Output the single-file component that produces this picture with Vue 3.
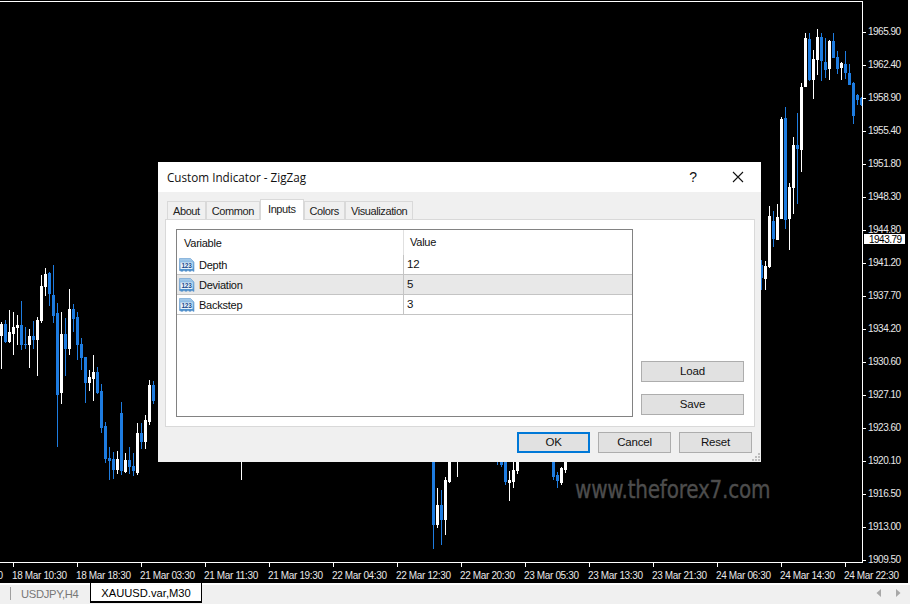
<script setup>
const priceLabels = ['1965.90','1962.40','1958.90','1955.40','1951.80','1948.30','1944.80','1941.20','1937.70','1934.20','1930.60','1927.10','1923.60','1920.10','1916.50','1913.00','1909.50']
const timeLabels = ['18 Mar 02:30','18 Mar 10:30','18 Mar 18:30','21 Mar 03:30','21 Mar 11:30','21 Mar 19:30','22 Mar 04:30','22 Mar 12:30','22 Mar 20:30','23 Mar 05:30','23 Mar 13:30','23 Mar 21:30','24 Mar 06:30','24 Mar 14:30','24 Mar 22:30']
const tabs = ['About','Common','Inputs','Colors','Visualization']
const rows = [
  { name: 'Depth', value: '12' },
  { name: 'Deviation', value: '5' },
  { name: 'Backstep', value: '3' }
]
// left cluster coordinates: x, colour, wick top, body top, body bottom, wick bottom (in 3x crop units)
const left = [
[4,'w',185,192,228,325],[16,'b',180,192,245,250],[28,'w',150,215,245,250],[40,'w',155,200,220,285],[52,'w',165,195,205,255],[64,'b',122,195,255,270],[76,'b',200,252,255,265],[88,'w',208,228,255,325],[100,'b',182,228,240,265],[112,'w',172,180,240,350],[124,'w',45,78,182,190],[136,'w',25,42,80,108],[148,'b',35,38,102,138],[160,'b',15,105,168,190],[172,'b',128,160,405,560],[184,'w',155,222,400,430],[196,'b',175,222,268,348],[208,'w',88,148,268,285],[220,'b',132,148,178,215],[232,'b',155,170,255,300],[244,'b',235,252,295,330],[256,'b',290,292,370,428],[268,'w',330,350,368,392],[280,'w',285,335,355,422],[292,'b',320,335,398,402],[304,'b',372,392,502,518],[316,'b',485,498,598,608],[328,'b',560,595,603,660],[340,'b',575,598,630,655],[352,'w',572,598,630,640],[364,'b',425,460,635,645],[376,'w',580,600,635,640],[388,'b',560,600,622,640],[400,'b',580,618,632,650],[412,'w',490,518,638,645],[424,'b',490,518,545,568],[436,'w',465,480,545,568],[448,'w',360,375,485,495],[460,'b',362,375,422,430]
].map(c => [c[0] / 3, c[1], ...c.slice(2).map(v => 260 + v / 3)])
const right = [
[34,'b',780,795,835,870],[46,'w',782,797,835,870],[58,'w',618,648,802,805],[70,'b',633,663,718,740],[82,'w',612,650,718,720],[94,'w',352,356,655,655],[106,'b',320,354,660,685],[118,'w',550,560,657,752],[130,'w',410,435,565,642],[142,'b',338,435,448,610],[154,'w',250,262,450,518],[166,'w',100,115,263,263],[178,'b',100,118,240,245],[190,'w',150,178,240,298],[202,'w',88,112,180,225],[214,'b',100,110,182,243],[226,'b',115,185,208,235],[238,'w',120,122,205,240],[250,'b',100,122,172,175],[262,'b',152,170,205,222],[274,'w',185,190,205,240],[286,'b',152,192,218,235],[298,'b',192,218,255,255],[310,'b',245,250,348,372],[322,'b',282,285,300,315],[334,'b',292,295,315,318]
].map(c => [750 + c[0] / 3, c[1], ...c.slice(2).map(v => v / 3)])
const below = [
[433,'b',455,455,525,549],[437,'w',488,505,525,528],[441,'b',490,505,520,545],[445,'w',477,480,520,535],[449,'w',455,455,482,483],[457,'w',455,455,455,477],[241,'w',455,455,455,480],[497,'b',455,455,460,465],[501,'b',455,455,465,467],[505,'b',455,455,482,485],[509,'w',471,480,483,501],[513,'w',455,470,482,488],[517,'w',455,455,471,474],[553,'b',455,455,477,480],[557,'b',472,475,481,488],[561,'w',467,468,483,485],[565,'w',455,455,470,473]
]
const candles = [...left, ...below, ...right].map(([x, c, wt, bt, bb, wb]) => ({
  x: Math.round(x), color: c === 'b' ? '#1e7ce0' : '#ffffff',
  wt: Math.round(wt), bt: Math.round(bt), bh: Math.max(1, Math.round(bb - bt)), wh: Math.max(1, Math.round(wb - wt))
}))
</script>

<template>
  <div class="page">
    <div class="terminal">
      <div class="plot">
        <svg width="862" height="562" viewBox="0 0 862 562" class="candles">
          <g v-for="(c, i) in candles" :key="i" :fill="c.color">
            <rect :x="c.x" :y="c.wt" width="1" :height="c.wh" />
            <rect :x="c.x - 1" :y="c.bt" width="3" :height="c.bh" />
          </g>
        </svg>
      </div>
      <div class="price-axis">
        <div v-for="p in priceLabels" :key="p" class="price"><i class="tick-h"></i>{{ p }}</div>
        <div class="bid">1943.79</div>
      </div>
      <div class="time-axis">
        <div v-for="t in timeLabels" :key="t" class="time"><i class="tick-v"></i>{{ t }}</div>
      </div>
      <div class="watermark">www.theforex7.com</div>
    </div>

    <div class="tabbar">
      <span class="sep"></span>
      <span class="sym">USDJPY,H4</span>
      <span class="sym active">XAUUSD.var,M30</span>
      <span class="spacer"></span>
      <svg class="arrows" width="26" height="10" viewBox="0 0 26 10">
        <path d="M5 1v8L0.5 5z" fill="#a8a8a8" />
        <path d="M20 1v8l4.500-4z" fill="#a8a8a8" />
      </svg>
    </div>

    <div class="dialog">
      <div class="title">
        <span class="title-text">Custom Indicator - ZigZag</span>
        <span class="help">?</span>
        <svg class="close" width="12" height="12" viewBox="0 0 12 12">
          <path d="M1 1l10 10M11 1L1 11" stroke="#111" stroke-width="1.100" fill="none" />
        </svg>
      </div>
      <div class="body">
        <div class="tabs">
          <span v-for="t in tabs" :key="t" class="tab" :class="{ on: t === 'Inputs' }">{{ t }}</span>
        </div>
        <div class="panel">
          <div class="list">
            <div class="head">
              <span class="c1 hd">Variable</span>
              <span class="c2 hd">Value</span>
            </div>
            <div v-for="(r, i) in rows" :key="r.name" class="row" :class="{ alt: i === 1 }">
              <span class="c1">
                <svg class="ico" width="16" height="16" viewBox="0 0 16 16">
                  <defs>
                    <linearGradient :id="'g' + i" x1="0" y1="0" x2="0" y2="1">
                      <stop offset="0" stop-color="#a8cdec" />
                      <stop offset="1" stop-color="#4488c8" />
                    </linearGradient>
                  </defs>
                  <path d="M0.500 1.500h11l3.500 3.500v9.500l-2-1-2 1-2-1-2 1-2-1-2 1-2.500-1z" :fill="'url(#g' + i + ')'" stroke="#5f97cc" stroke-width="0.600" />
                  <rect x="1.500" y="5.500" width="12" height="6.500" fill="#e6f1fa" />
                  <text x="7.500" y="11.200" text-anchor="middle" class="ico-t">123</text>
                </svg>
                {{ r.name }}
              </span>
              <span class="c2">{{ r.value }}</span>
            </div>
          </div>
          <div class="side">
            <button class="btn wide">Load</button>
            <button class="btn wide">Save</button>
          </div>
        </div>
        <div class="actions">
          <button class="btn act primary">OK</button>
          <button class="btn act">Cancel</button>
          <button class="btn act">Reset</button>
        </div>
      </div>
      <svg class="grip" width="9" height="9" viewBox="0 0 9 9" fill="#bdbdbd">
        <rect x="6" y="0" width="2" height="2" /><rect x="3" y="3" width="2" height="2" /><rect x="6" y="3" width="2" height="2" />
        <rect x="0" y="6" width="2" height="2" /><rect x="3" y="6" width="2" height="2" /><rect x="6" y="6" width="2" height="2" />
      </svg>
    </div>
  </div>
</template>

<style>
html, body { margin: 0; background: #fff; overflow: hidden; }
</style>

<style scoped>
.page {
  position: relative;
  width: 910px;
  height: 607px;
  background: #fff;
  font-family: "Liberation Sans", Arial, sans-serif;
  overflow: hidden;
}
.terminal {
  position: relative;
  width: 908px;
  height: 583px;
  background: #000;
  display: grid;
  grid-template-columns: 863px 45px;
  grid-template-rows: 563px 20px;
  overflow: hidden;
}
.plot {
  border-top: 1px solid #fff;
  border-right: 1px solid #fff;
  border-bottom: 1px solid #fff;
  margin-top: 1px;
  overflow: hidden;
}
.candles { display: block; margin-top: -2px; }
.price-axis {
  position: relative;
  padding-top: 25px;
  display: flex;
  flex-direction: column;
  color: #e8e8e8;
  font-size: 10px;
}
.price {
  position: relative;
  height: 33px;
  line-height: 14px;
  padding-left: 5px;
  flex: none;
  letter-spacing: -0.5px;
}
.tick-h {
  position: absolute;
  left: 0;
  top: 7px;
  width: 3px;
  height: 1px;
  background: #fff;
}
.bid {
  position: absolute;
  left: 1px;
  top: 234px;
  width: 41px;
  height: 10px;
  line-height: 11px;
  background: #fff;
  color: #000;
  padding-left: 5px;
  box-sizing: border-box;
  font-size: 10px;
  letter-spacing: -0.5px;
}
.time-axis {
  grid-column: 1 / span 2;
  display: flex;
  margin-left: -52px;
  color: #e8e8e8;
  font-size: 10px;
}
.time {
  position: relative;
  flex: none;
  width: 64px;
  height: 20px;
  padding-top: 6px;
  box-sizing: border-box;
  white-space: nowrap;
  line-height: 13px;
  letter-spacing: -0.36px;
}
.tick-v {
  position: absolute;
  left: 1px;
  top: 0;
  width: 1px;
  height: 4px;
  background: #fff;
}
.watermark {
  position: absolute;
  left: 575px;
  top: 474px;
  font-family: "DejaVu Sans", sans-serif;
  font-size: 25.500px;
  letter-spacing: -0.3px;
  color: #4d4d4d;
  -webkit-text-stroke: 0.4px #4d4d4d;
  white-space: nowrap;
  transform: scaleX(0.785);
  transform-origin: left center;
}
.tabbar {
  height: 21px;
  box-sizing: border-box;
  border-top: 2px solid #fff;
  background: #f0f0f0;
  display: flex;
  align-items: stretch;
  font-size: 11.200px;
}
.sep {
  width: 1px;
  height: 13px;
  margin: 2px 10px 0 10px;
  background: #a0a0a0;
}
.sym {
  color: #777;
  width: 69px;
  line-height: 18px;
  flex: none;
  white-space: nowrap;
  letter-spacing: -0.3px;
}
.sym.active {
  color: #000;
  background: #fff;
  border: 1px solid #000;
  border-width: 0 1px 2px 1px;
  margin-top: -2px;
  height: 20px;
  width: 112px;
  box-sizing: border-box;
  text-align: center;
  line-height: 21px;
  letter-spacing: 0;
}
.spacer { flex: 1; }
.arrows { margin: 3px 8px 0 0; }

.dialog {
  position: absolute;
  left: 158px;
  top: 162px;
  width: 603px;
  height: 300px;
  background: #f0f0f0;
  display: flex;
  flex-direction: column;
  font-size: 12px;
  color: #111;
}
.title {
  height: 30px;
  flex: none;
  background: #fff;
  display: flex;
  align-items: center;
  padding-left: 9px;
  position: relative;
}
.title-text {
  font-family: "Open Sans", sans-serif;
  font-size: 11.700px;
  flex: 1;
}
.help { font-size: 14px; margin-right: 35px; }
.close { margin-right: 17px; }
.body {
  flex: 1;
  display: flex;
  flex-direction: column;
  padding: 7px 6px 0 7px;
}
.tabs {
  display: flex;
  height: 20px;
  padding-left: 2px;
  align-items: flex-end;
  position: relative;
  z-index: 1;
}
.tab {
  height: 18px;
  line-height: 18px;
  padding: 0 5px;
  background: #f0f0f0;
  border: 1px solid #d9d9d9;
  border-bottom: 0;
  box-sizing: border-box;
  font-size: 11px;
  letter-spacing: -0.4px;
  color: #222;
}
.tab.on {
  height: 21px;
  line-height: 18px;
  padding: 0 7px;
  background: #fff;
  position: relative;
  margin-bottom: -1px;
  z-index: 1;
}
.panel {
  height: 208px;
  flex: none;
  background: #fff;
  border: 1px solid #d9d9d9;
  display: flex;
  box-sizing: border-box;
  padding: 9px 10px 9px 10px;
  gap: 8px;
}
.list {
  width: 457px;
  height: 188px;
  box-sizing: border-box;
  border: 1px solid #828282;
  flex: none;
  background: #fff;
}
.head, .row { display: flex; }
.head { height: 25px; align-items: center; font-size: 11px; letter-spacing: -0.25px; }
.row {
  height: 20px;
  border-bottom: 1px solid #c4c4c4;
  box-sizing: border-box;
  align-items: center;
  font-size: 11px;
  letter-spacing: -0.25px;
}
.row.alt { background: #e8e8e8; }
.c1 {
  width: 226px;
  flex: none;
  display: flex;
  align-items: center;
  gap: 4px;
  padding-left: 2px;
  box-sizing: border-box;
  height: 100%;
}
.c2 {
  flex: 1;
  padding-left: 3px;
  height: 100%;
  line-height: 19px;
  border-left: 1px solid #c4c4c4;
  font-size: 11.500px;
}
.hd { padding-left: 7px; }
.c2.hd { padding-left: 6px; line-height: 25px; border-left-color: #e0e0e0; font-size: 11px; }
.ico-t {
  font: bold 6.500px "Liberation Sans", sans-serif;
  letter-spacing: -0.2px;
  fill: #1a4a8c;
}
.side {
  display: flex;
  flex-direction: column;
  justify-content: flex-end;
  gap: 12px;
  padding-bottom: 2px;
}
.btn {
  font: 11.500px "Liberation Sans", sans-serif;
  letter-spacing: -0.2px;
  color: #111;
  background: #e1e1e1;
  border: 1px solid #adadad;
  padding: 0 0 2px;
  box-sizing: border-box;
}
.wide { width: 103px; height: 21px; }
.actions {
  display: flex;
  justify-content: flex-end;
  gap: 8px;
  padding: 5px 3px 0 0;
}
.act { width: 73px; height: 21px; }
.primary { border: 2px solid #0078d7; }
.grip { position: absolute; right: 0; bottom: 0; }
</style>
